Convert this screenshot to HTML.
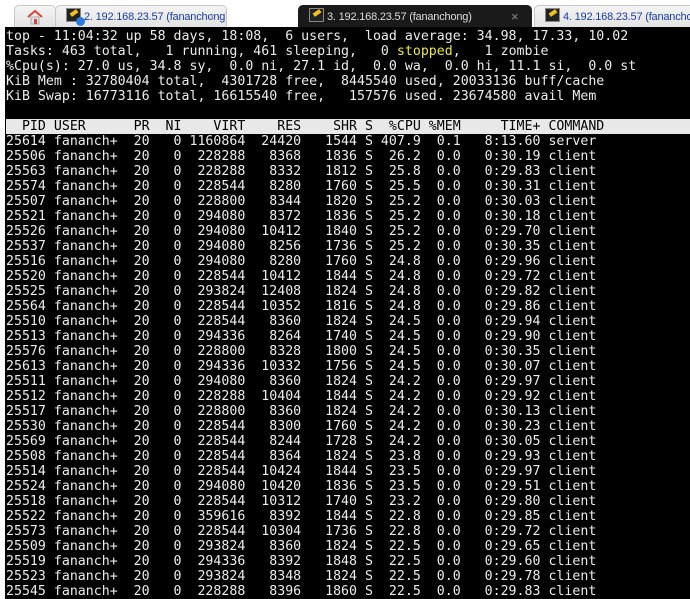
<!DOCTYPE html>
<html><head><style>
body{margin:0;width:690px;height:599px;overflow:hidden;background:#fff;position:relative;font-family:"Liberation Sans",sans-serif}
.bar{position:absolute;left:0;top:0;width:690px;height:27px;background:#fff}
.tab{position:absolute;top:5px;height:22px;background:linear-gradient(#f4f4f4,#e2e2e2);border:1px solid #c8c8c8;border-bottom:none;border-radius:5px 5px 0 0;font-size:11px;letter-spacing:-0.2px;color:#1a3fa0;line-height:22px;white-space:nowrap;overflow:hidden}
.act{background:#1a1a1a;color:#ddd;border-color:#1a1a1a}
.ic{display:inline-block;width:13px;height:12px;background:#222;border:1px solid #888;vertical-align:-2px;margin:0 3px 0 10px;position:relative}
.ic:after{content:"";position:absolute;left:3px;top:2px;width:8px;height:4px;background:#f0c020;transform:rotate(-35deg)}
.dot{position:absolute;left:20px;top:11px;width:9px;height:9px;border-radius:50%;background:#2a7be0}
.x{position:absolute;color:#bbb;font-size:13px}
.term{position:absolute;left:5px;top:27px;width:685px;height:572px;background:#000}
pre{margin:0;position:absolute;left:1px;top:2px;font-family:"DejaVu Sans Mono",monospace;font-size:13.25px;line-height:15px;color:#ececec}
.h{background:#e8e8e8;color:#000;display:inline-block;width:684px}
.y{color:#e8e84a}
</style></head><body>
<div class="bar">
<div class="tab" style="left:14px;width:40px;text-align:center"><svg width="18" height="16" viewBox="0 0 18 16" style="margin-top:3px"><path d="M2 8 L9 2 L16 8" fill="none" stroke="#d9443a" stroke-width="2"/><rect x="5" y="8" width="8" height="7" fill="#e0e0e0" stroke="#aaa"/><rect x="8" y="10" width="3" height="5" fill="#d9443a"/></svg></div>
<div class="tab" style="left:55px;width:170px"><span class="ic"></span><span class="dot"></span>2. 192.168.23.57 (fananchong)<span class="x" style="left:152px">×</span></div>
<div class="tab act" style="left:298px;width:232px"><span class="ic"></span>3. 192.168.23.57 (fananchong)<span class="x" style="left:212px;color:#888">×</span></div>
<div class="tab" style="left:534px;width:170px"><span class="ic"></span>4. 192.168.23.57 (fananchong)</div>
</div>
<div class="term"><pre>top - 11:04:32 up 58 days, 18:08,  6 users,  load average: 34.98, 17.33, 10.02
Tasks: 463 total,   1 running, 461 sleeping,   0 <span class="y">stopped</span>,   1 zombie
%Cpu(s): 27.0 us, 34.8 sy,  0.0 ni, 27.1 id,  0.0 wa,  0.0 hi, 11.1 si,  0.0 st
KiB Mem : 32780404 total,  4301728 free,  8445540 used, 20033136 buff/cache
KiB Swap: 16773116 total, 16615540 free,   157576 used. 23674580 avail Mem

<span class="h">  PID USER      PR  NI    VIRT    RES    SHR S  %CPU %MEM     TIME+ COMMAND</span>
25614 fananch+  20   0 1160864  24420   1544 S 407.9  0.1   8:13.60 server
25506 fananch+  20   0  228288   8368   1836 S  26.2  0.0   0:30.19 client
25563 fananch+  20   0  228288   8332   1812 S  25.8  0.0   0:29.83 client
25574 fananch+  20   0  228544   8280   1760 S  25.5  0.0   0:30.31 client
25507 fananch+  20   0  228800   8344   1820 S  25.2  0.0   0:30.03 client
25521 fananch+  20   0  294080   8372   1836 S  25.2  0.0   0:30.18 client
25526 fananch+  20   0  294080  10412   1840 S  25.2  0.0   0:29.70 client
25537 fananch+  20   0  294080   8256   1736 S  25.2  0.0   0:30.35 client
25516 fananch+  20   0  294080   8280   1760 S  24.8  0.0   0:29.96 client
25520 fananch+  20   0  228544  10412   1844 S  24.8  0.0   0:29.72 client
25525 fananch+  20   0  293824  12408   1824 S  24.8  0.0   0:29.82 client
25564 fananch+  20   0  228544  10352   1816 S  24.8  0.0   0:29.86 client
25510 fananch+  20   0  228544   8360   1824 S  24.5  0.0   0:29.94 client
25513 fananch+  20   0  294336   8264   1740 S  24.5  0.0   0:29.90 client
25576 fananch+  20   0  228800   8328   1800 S  24.5  0.0   0:30.35 client
25613 fananch+  20   0  294336  10332   1756 S  24.5  0.0   0:30.07 client
25511 fananch+  20   0  294080   8360   1824 S  24.2  0.0   0:29.97 client
25512 fananch+  20   0  228288  10404   1844 S  24.2  0.0   0:29.92 client
25517 fananch+  20   0  228800   8360   1824 S  24.2  0.0   0:30.13 client
25530 fananch+  20   0  228544   8300   1760 S  24.2  0.0   0:30.23 client
25569 fananch+  20   0  228544   8244   1728 S  24.2  0.0   0:30.05 client
25508 fananch+  20   0  228544   8364   1824 S  23.8  0.0   0:29.93 client
25514 fananch+  20   0  228544  10424   1844 S  23.5  0.0   0:29.97 client
25524 fananch+  20   0  294080  10420   1836 S  23.5  0.0   0:29.51 client
25518 fananch+  20   0  228544  10312   1740 S  23.2  0.0   0:29.80 client
25522 fananch+  20   0  359616   8392   1844 S  22.8  0.0   0:29.85 client
25573 fananch+  20   0  228544  10304   1736 S  22.8  0.0   0:29.72 client
25509 fananch+  20   0  293824   8360   1824 S  22.5  0.0   0:29.65 client
25519 fananch+  20   0  294336   8392   1848 S  22.5  0.0   0:29.60 client
25523 fananch+  20   0  293824   8348   1824 S  22.5  0.0   0:29.78 client
25545 fananch+  20   0  228288   8396   1860 S  22.5  0.0   0:29.83 client</pre></div>
</body></html>
